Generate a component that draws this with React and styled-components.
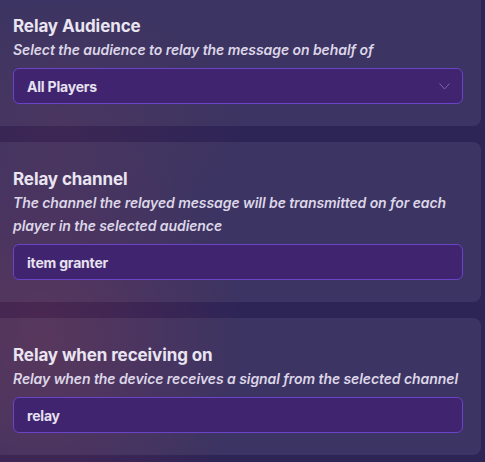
import React from "react";
import styled, { createGlobalStyle } from "styled-components";

const Global = createGlobalStyle`
  html, body {
    margin: 0;
    padding: 0;
    height: 100%;
    overflow: hidden;
  }
  body {
    font-family: Inter, "Noto Sans", sans-serif;
    background:
      radial-gradient(ellipse 200px 230px at 40px 340px, rgba(78, 40, 80, 0.95) 0%, rgba(70, 38, 82, 0.6) 55%, rgba(60, 38, 85, 0) 100%),
      radial-gradient(ellipse 180px 120px at 60px 120px, rgba(70, 40, 82, 0.6) 0%, rgba(60, 38, 85, 0) 100%),
      #2e2557;
  }
  #root { min-height: 100%; }
`;

const Page = styled.div`
  display: flex;
  flex-direction: column;
  gap: 16px;
  margin-top: -11px;
`;

const Card = styled.section`
  display: flex;
  flex-direction: column;
  margin: 0 4px 0 -20px;
  padding: 25px 18px 22px 33px;
  background: rgba(255, 255, 255, 0.07);
  border-radius: 8px;
`;

const Title = styled.div`
  font-size: 17px;
  line-height: 24px;
  font-weight: 700;
  color: #e9e5f1;
  letter-spacing: -0.1px;
`;

const Desc = styled.div`
  font-size: 14px;
  line-height: 23px;
  font-weight: 600;
  font-style: italic;
  color: #dcd6e8;
  letter-spacing: -0.07px;
  margin-bottom: 7px;
`;

const Field = styled.div`
  display: flex;
  align-items: center;
  justify-content: space-between;
  height: 34px;
  padding: 0 13px;
  background: #41246f;
  border: 1px solid #6a44c6;
  border-radius: 6px;
  font-size: 14px;
  font-weight: 700;
  color: #e6e1f0;
  letter-spacing: -0.2px;
`;

const Chevron = styled.svg`
  width: 11px;
  height: 7px;
  margin-right: -1px;
  margin-top: 1px;
`;

const sections = [
  {
    title: "Relay Audience",
    desc: "Select the audience to relay the message on behalf of",
    value: "All Players",
    select: true,
  },
  {
    title: "Relay channel",
    desc: "The channel the relayed message will be transmitted on for each player in the selected audience",
    value: "item granter",
  },
  {
    title: "Relay when receiving on",
    desc: "Relay when the device receives a signal from the selected channel",
    value: "relay",
  },
];

export default function App() {
  return (
    <>
      <Global />
      <Page>
        {sections.map((s) => (
          <Card key={s.title}>
            <Title>{s.title}</Title>
            <Desc>{s.desc}</Desc>
            <Field>
              <span>{s.value}</span>
              {s.select && (
                <Chevron viewBox="0 0 11 7">
                  <polyline points="0.5,0.5 5.5,6 10.5,0.5" fill="none" stroke="#7e63b9" strokeWidth="1" />
                </Chevron>
              )}
            </Field>
          </Card>
        ))}
      </Page>
    </>
  );
}
